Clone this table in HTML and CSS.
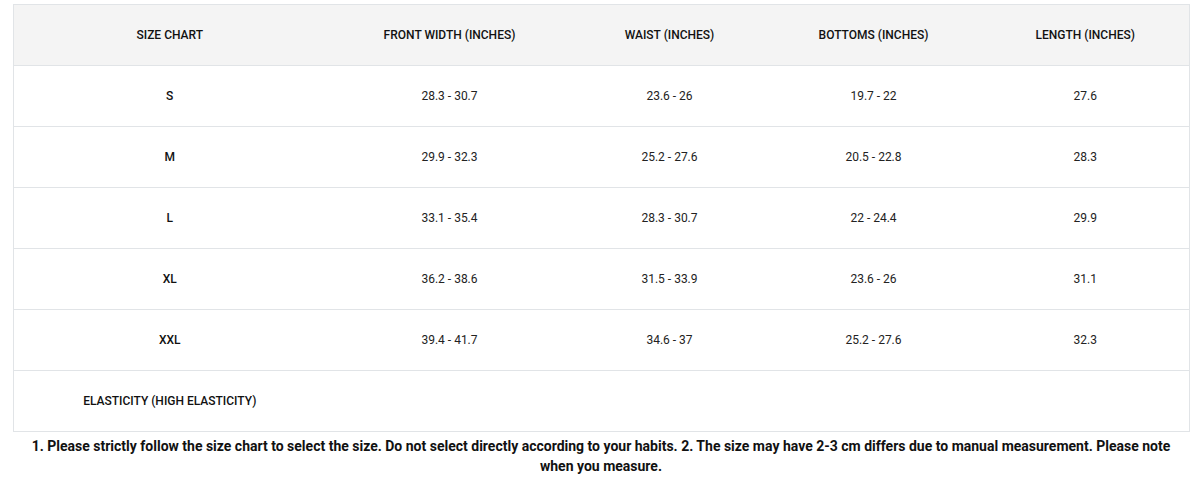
FILE: index.html
```html
<!DOCTYPE html>
<html>
<head>
<meta charset="utf-8">
<link rel="stylesheet" href="styles.css">
</head>
<body>
<div class="wrap">
  <table class="chart">
    <colgroup>
      <col class="c1"><col class="c2"><col class="c3"><col class="c4"><col class="c5">
    </colgroup>
    <thead>
      <tr>
        <th>SIZE CHART</th>
        <th>FRONT WIDTH (INCHES)</th>
        <th>WAIST (INCHES)</th>
        <th>BOTTOMS (INCHES)</th>
        <th>LENGTH (INCHES)</th>
      </tr>
    </thead>
    <tbody>
      <tr><td class="sz">S</td><td>28.3 - 30.7</td><td>23.6 - 26</td><td>19.7 - 22</td><td>27.6</td></tr>
      <tr><td class="sz">M</td><td>29.9 - 32.3</td><td>25.2 - 27.6</td><td>20.5 - 22.8</td><td>28.3</td></tr>
      <tr><td class="sz">L</td><td>33.1 - 35.4</td><td>28.3 - 30.7</td><td>22 - 24.4</td><td>29.9</td></tr>
      <tr><td class="sz">XL</td><td>36.2 - 38.6</td><td>31.5 - 33.9</td><td>23.6 - 26</td><td>31.1</td></tr>
      <tr><td class="sz">XXL</td><td>39.4 - 41.7</td><td>34.6 - 37</td><td>25.2 - 27.6</td><td>32.3</td></tr>
      <tr><td class="sz">ELASTICITY (HIGH ELASTICITY)</td><td></td><td></td><td></td><td></td></tr>
    </tbody>
  </table>
  <p class="note">1. Please strictly follow the size chart to select the size. Do not select directly according to your habits. 2. The size may have 2-3 cm differs due to manual measurement. Please note when you measure.</p>
</div>
</body>
</html>
```
FILE: styles.css
```css
html, body {
  margin: 0;
  padding: 0;
  background: #fff;
}
body {
  font-family: Roboto, "Liberation Sans", Arial, sans-serif;
  color: #111;
}
.wrap {
  width: 1176px;
  padding: 4px 14px 0 13px;
}
.chart {
  width: 1176px;
  border-collapse: collapse;
  table-layout: fixed;
  border: 1px solid #e1e4e7;
}
.c1 { width: 312px; }
.c2 { width: 248px; }
.c3 { width: 192px; }
.c4 { width: 216px; }
.c5 { width: 208px; }
.chart th,
.chart td {
  height: 60px;
  padding: 0;
  text-align: center;
  vertical-align: middle;
  font-size: 12px;
  border-bottom: 1px solid #e1e4e7;
}
.chart th {
  background: #f4f4f4;
  font-weight: 500;
  color: #111;
}
.chart td {
  font-weight: 400;
  color: #222;
}
.chart td.sz {
  font-weight: 500;
  color: #111;
}
.note {
  margin: 4px 0 0;
  padding: 0 12px;
  font-size: 14px;
  line-height: 20px;
  font-weight: 700;
  text-align: center;
  color: #111;
}
```
